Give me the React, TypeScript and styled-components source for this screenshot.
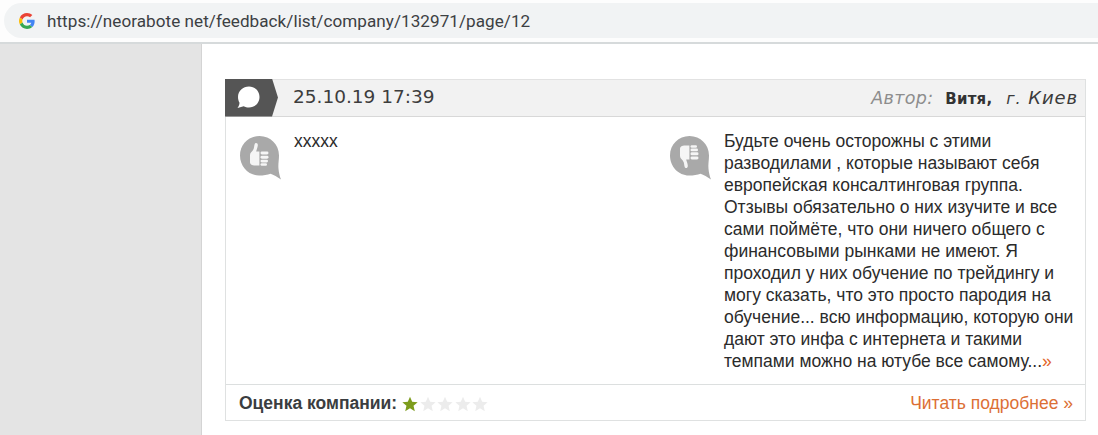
import React from "react";
import styled, { createGlobalStyle } from "styled-components";

const Global = createGlobalStyle`
  html, body { margin: 0; padding: 0; background: #fff; }
  body { width: 1098px; height: 435px; overflow: hidden; font-family: "Liberation Sans", Arial, sans-serif; }
`;
const Page = styled.div`width: 1098px; height: 435px; display: flex; flex-direction: column;`;
const Chrome = styled.div`
  height: 39px; padding: 3px 0 0 4px; background: #fdfdfd;
  border-bottom: 2px solid #d6dadb; flex: none;
`;
const AddressBar = styled.div`
  height: 35px; background: #f1f3f4; border-radius: 18px 0 0 18px;
  display: flex; align-items: center; padding-left: 15px; gap: 12px;
  font-size: 17.1px; color: #3c4043; font-family: "Roboto", "Liberation Sans", sans-serif;
  letter-spacing: 0.05px;
`;
const Main = styled.div`flex: 1; display: flex; min-height: 0;`;
const Sidebar = styled.div`width: 201px; background: #e4e4e4; border-right: 1px solid #d4d4d4; flex: none;`;
const Content = styled.div`flex: 1; padding: 35px 12px 0 23px;`;
const Card = styled.article`width: 861px; height: 342px; box-sizing: border-box; border: 1px solid #dfe1e1; border-top: none; display: flex; flex-direction: column;`;
const Header = styled.header`
  height: 38px; flex: none; display: flex; align-items: center; background: #f2f2f2;
  border-top: 1px solid #e2e2e2; border-bottom: 1px solid #d8d8d8; box-sizing: border-box;
  font-family: "DejaVu Sans", Verdana, sans-serif; margin-left: -1px;
`;
const Badge = styled.div`
  width: 53px; height: 38px; margin-top: -1px; flex: none; background: #555;
  clip-path: polygon(0 0, 47px 0, 53px 19px, 47px 100%, 0 100%);
  display: flex; align-items: center; padding-left: 11px; box-sizing: border-box;
`;
const DateText = styled.time`margin-left: 15px; padding-bottom: 3px; font-size: 18.5px; color: #3d3d3d;`;
const Author = styled.div`margin-left: auto; padding-right: 7px; padding-bottom: 1px; display: flex; align-items: baseline; gap: 13px; font-size: 15px; color: #333;`;
const AuthorLabel = styled.span`font-style: italic; font-size: 17.5px; color: #8d8d8d; letter-spacing: 0.3px;`;
const AuthorName = styled.b`font-weight: 700; font-size: 15px; letter-spacing: 0.2px; color: #333; margin-left: -1px; margin-right: 1px;`;
const City = styled.i`font-size: 18px; letter-spacing: 0.9px; color: #3b3b3b;`;
const CityPrefix = styled.span`font-size: 16px;`;
const Body = styled.div`flex: 1; display: grid; grid-template-columns: 430px 1fr; padding: 13px 0 0 13px; min-height: 0;`;
const Opinion = styled.section`display: flex; gap: 13px; align-items: flex-start;`;
const Bubble = styled.div`width: 42px; flex: none; margin-top: 5px;`;
const OpinionText = styled.p`margin: 0; white-space: nowrap; font-size: 17.5px; line-height: 22px; color: #2b2b2b;`;
const More = styled.span`color: #e2662b;`;
const Footer = styled.footer`
  height: 36px; flex: none; display: flex; align-items: center; justify-content: space-between;
  border-top: 1px solid #dcdfdf; padding: 2px 12px 0 13px; font-size: 17.5px; box-sizing: border-box;
`;
const Rating = styled.div`display: flex; align-items: center; gap: 5px; font-weight: 700; color: #3a3d40;`;
const Stars = styled.div`display: flex; gap: 1.5px;`;
const ReadMore = styled.a`color: #dc6f35; text-decoration: none;`;

const GoogleG = () => (
  <svg width="16" height="16" viewBox="0 0 48 48">
    <path fill="#EA4335" d="M24 9.5c3.5 0 6.7 1.3 9.2 3.4l6.9-6.9C35.9 2.3 30.3 0 24 0 14.6 0 6.5 5.400 2.600 13.200l8 6.200C12.500 13.600 17.800 9.500 24 9.500z" />
    <path fill="#4285F4" d="M46.900 24.500c0-1.600-.2-3.100-.4-4.500H24v9h12.900c-.6 3-2.200 5.500-4.700 7.200l7.700 6c4.500-4.200 7-10.300 7-17.700z" />
    <path fill="#FBBC05" d="M10.600 28.600c-.5-1.400-.8-3-.8-4.600s.3-3.200.8-4.600l-8-6.200C.9 16.500 0 20.100 0 24s.9 7.500 2.600 10.800l8-6.200z" />
    <path fill="#34A853" d="M24 48c6.500 0 11.900-2.100 15.900-5.800l-7.700-6c-2.200 1.500-4.900 2.300-8.200 2.300-6.200 0-11.500-4.100-13.400-9.900l-8 6.200C6.500 42.600 14.600 48 24 48z" />
  </svg>
);

const ChatIcon = () => (
  <svg width="25" height="25" viewBox="0 0 25 25">
    <path fill="#fff" d="M13 1.500c6 0 10.500 4.500 10.500 10.500S19 22.500 13 22.500c-2 0-3.800-.5-5.300-1.300L1.500 23c1.200-1.600 1.900-3.300 2-5.200C2.500 16.200 2 14.200 2 12 2 6 7 1.500 13 1.500z" />
  </svg>
);

const ThumbBubble = ({ down }: { down?: boolean }) => (
  <svg width="42" height="46" viewBox="0 0 42 46">
    <path fill="#a9a9a9" d="M20.500 1C31.500 1 40 9.500 40 20.500c0 4.800-1 9-.5 13.500.4 3.500 1.100 7 2.500 10.500-3.500-2.500-7.500-5-10.500-5.800-3 1.200-7 1.800-11.500 1.800C9.500 40.500 1 31.500 1 20.500S9.500 1 20.500 1z" />
    <g fill="#fff" fillOpacity="0.88" transform={down ? "matrix(1 0 0 -1 0 41)" : undefined}>
      <path d="M16.700 8c1.500-.2 2.300 1 2.100 2.600-.2 2.200-1.200 4-1.600 5.900h3.200v14h-5.200c-1.800 0-4.200-1-4.200-3v-7.500c0-2.500 2.500-3.500 3.600-6 .8-2 .6-5.700 2.100-6z" />
      <rect x="21.500" y="16.500" width="8" height="3" rx="1.400" />
      <rect x="21.500" y="20.700" width="8" height="3" rx="1.400" />
      <rect x="21.500" y="24.700" width="7.500" height="2.700" rx="1.300" />
      <rect x="21.500" y="28.300" width="6.500" height="2.500" rx="1.200" />
    </g>
  </svg>
);

const Star = ({ on }: { on?: boolean }) => (
  <svg width="16" height="16" viewBox="0 0 24 24">
    <path fill={on ? "#7d9c1c" : "#ececec"} d="M12 1l3.300 7.600 8.200.7-6.200 5.400 1.900 8L12 18.500 4.800 22.700l1.900-8L.5 9.300l8.200-.7z" />
  </svg>
);

export default function App() {
  return (
    <>
      <Global />
      <Page>
        <Chrome>
          <AddressBar>
            <GoogleG />
            <span>https://neorabote net/feedback/list/company/132971/page/12</span>
          </AddressBar>
        </Chrome>
        <Main>
          <Sidebar />
          <Content>
            <Card>
              <Header>
                <Badge><ChatIcon /></Badge>
                <DateText>25.10.19 17:39</DateText>
                <Author>
                  <AuthorLabel>Автор:</AuthorLabel>
                  <AuthorName>Витя,</AuthorName>
                  <City><CityPrefix>г.</CityPrefix> Киев</City>
                </Author>
              </Header>
              <Body>
                <Opinion>
                  <Bubble><ThumbBubble /></Bubble>
                  <OpinionText>ххххх</OpinionText>
                </Opinion>
                <Opinion>
                  <Bubble><ThumbBubble down /></Bubble>
                  <OpinionText>
                    Будьте очень осторожны с этими<br />
                    разводилами , которые называют себя<br />
                    европейская консалтинговая группа.<br />
                    Отзывы обязательно о них изучите и все<br />
                    сами поймёте, что они ничего общего с<br />
                    финансовыми рынками не имеют. Я<br />
                    проходил у них обучение по трейдингу и<br />
                    могу сказать, что это просто пародия на<br />
                    обучение... всю информацию, которую они<br />
                    дают это инфа с интернета и такими<br />
                    темпами можно на ютубе все самому...<More>»</More>
                  </OpinionText>
                </Opinion>
              </Body>
              <Footer>
                <Rating>
                  Оценка компании:
                  <Stars>
                    <Star on /><Star /><Star /><Star /><Star />
                  </Stars>
                </Rating>
                <ReadMore href="#">Читать подробнее »</ReadMore>
              </Footer>
            </Card>
          </Content>
        </Main>
      </Page>
    </>
  );
}
